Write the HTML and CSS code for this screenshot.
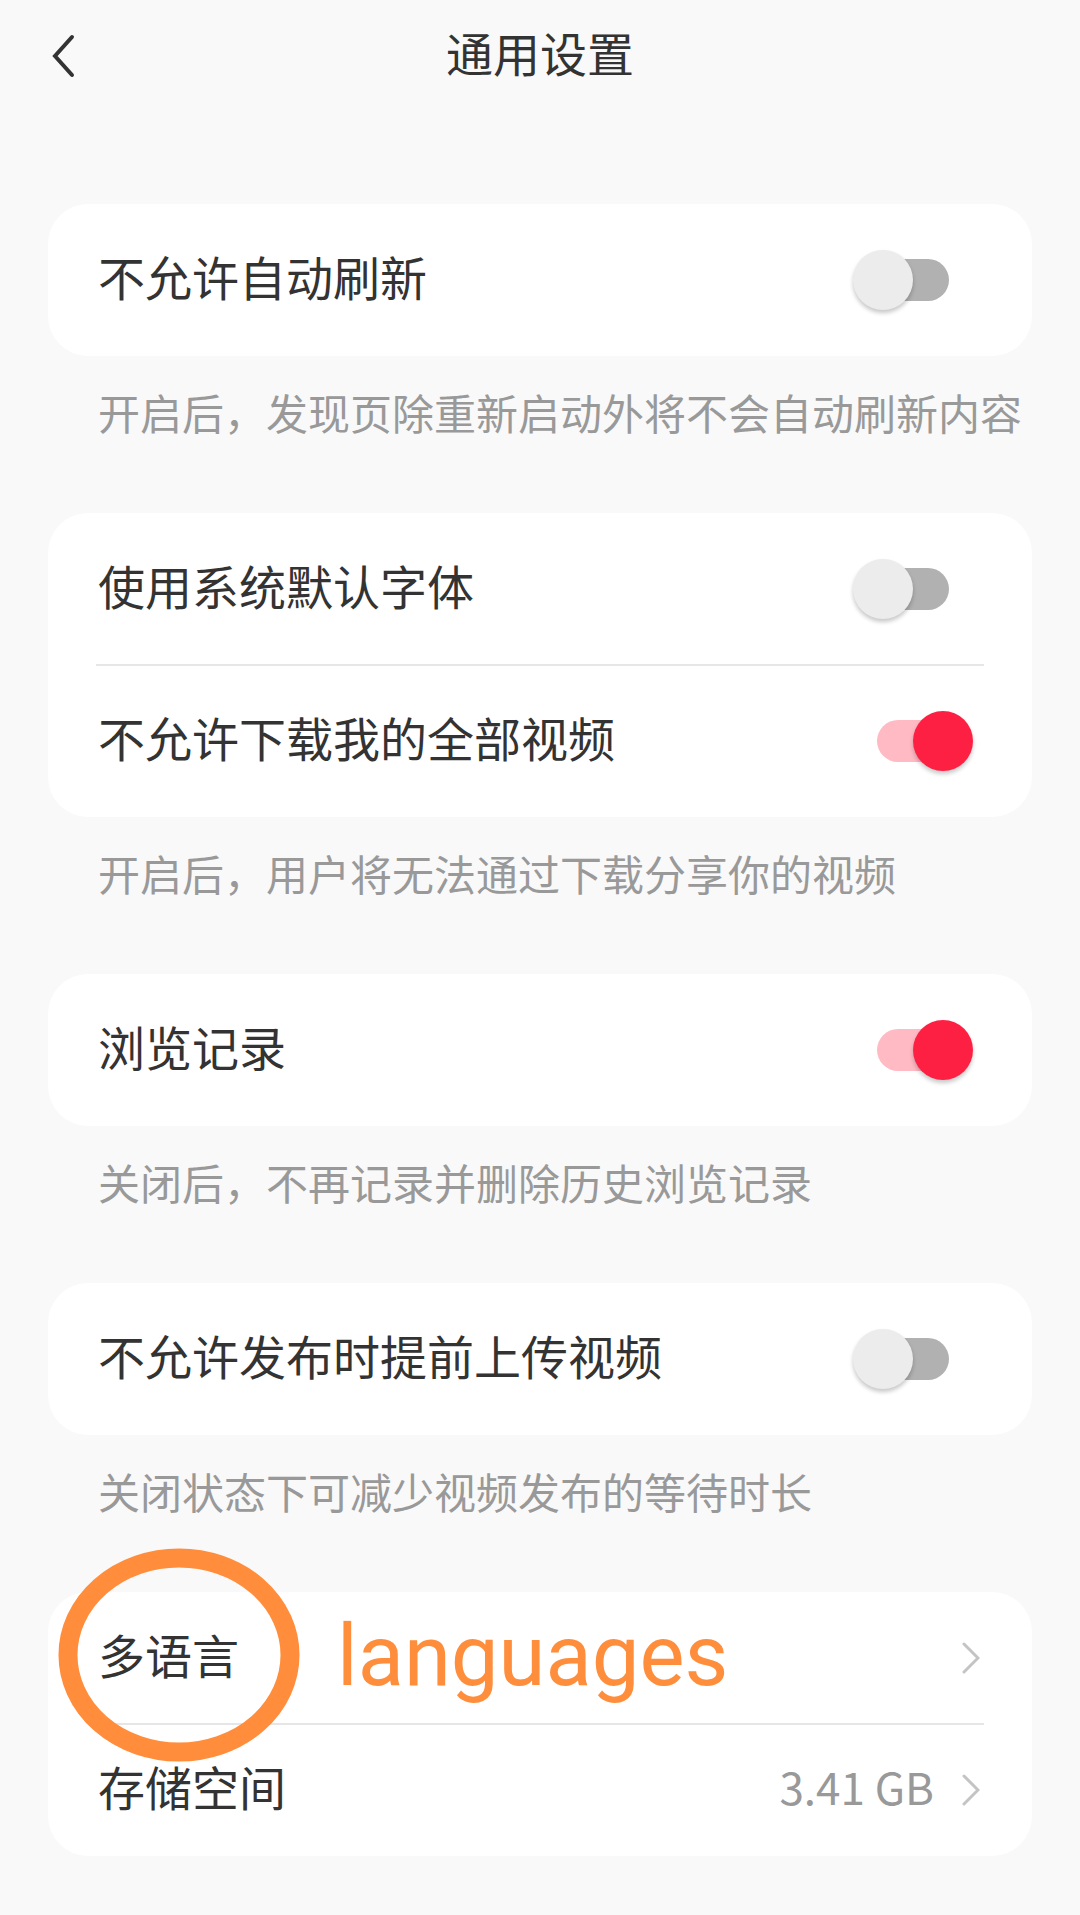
FILE: index.html
```html
<!DOCTYPE html>
<html lang="zh-CN">
<head>
  <meta charset="UTF-8" />
  <title>通用设置</title>
  <link rel="stylesheet" href="styles.css">
</head>
<body>
  <header class="topbar">
    <button class="back" aria-label="返回">
      <svg width="24" height="44" viewBox="0 0 24 44">
        <polyline points="20,3 3,22 20,41" fill="none" stroke="#333" stroke-width="4" stroke-linecap="round" />
      </svg>
    </button>
    <h1 class="title">通用设置</h1>
    <span></span>
  </header>

  <main class="list">
    <section class="card">
      <div class="row">
        <span class="label">不允许自动刷新</span>
        <span class="switch"></span>
      </div>
    </section>
    <p class="hint">开启后，发现页除重新启动外将不会自动刷新内容</p>

    <section class="card">
      <div class="row">
        <span class="label">使用系统默认字体</span>
        <span class="switch"></span>
      </div>
      <div class="divider"></div>
      <div class="row">
        <span class="label">不允许下载我的全部视频</span>
        <span class="switch on"></span>
      </div>
    </section>
    <p class="hint">开启后，用户将无法通过下载分享你的视频</p>

    <section class="card">
      <div class="row">
        <span class="label">浏览记录</span>
        <span class="switch on"></span>
      </div>
    </section>
    <p class="hint">关闭后，不再记录并删除历史浏览记录</p>

    <section class="card">
      <div class="row">
        <span class="label">不允许发布时提前上传视频</span>
        <span class="switch"></span>
      </div>
    </section>
    <p class="hint">关闭状态下可减少视频发布的等待时长</p>

    <section class="card card-links">
      <div class="row row-link">
        <span class="label">多语言</span>
        <svg class="chevron" width="18" height="32" viewBox="0 0 18 32">
          <polyline points="2,2 16,16 2,30" fill="none" stroke="#c4c4c4" stroke-width="3" stroke-linecap="round" />
        </svg>
      </div>
      <div class="divider"></div>
      <div class="row row-link">
        <span class="label">存储空间</span>
        <span class="value">3.41 GB</span>
        <svg class="chevron" width="18" height="32" viewBox="0 0 18 32">
          <polyline points="2,2 16,16 2,30" fill="none" stroke="#c4c4c4" stroke-width="3" stroke-linecap="round" />
        </svg>
      </div>

      <!-- annotation drawn over the screenshot -->
      <svg class="mark-circle" width="242" height="214" viewBox="0 0 242 214">
        <ellipse cx="121" cy="107" rx="111" ry="97" fill="none" stroke="#ff8d3b" stroke-width="19" />
      </svg>
      <span class="mark-text">languages</span>
    </section>
  </main>
</body>
</html>
```

FILE: styles.css
```css
body {
  margin: 0;
  background: #f9f9f9;
  color: #333;
  font-family: "Noto Sans CJK SC", "Noto Sans", sans-serif;
}

.topbar {
  height: 112px;
  display: grid;
  grid-template-columns: 1fr auto 1fr;
  align-items: center;
}

.back {
  justify-self: start;
  margin-left: 52px;
  padding: 0;
  border: none;
  background: none;
  display: flex;
}

.title {
  margin: 0;
  padding-bottom: 10px;
  font-size: 47px;
  font-weight: 400;
  line-height: 1;
}

.list {
  padding: 92px 48px 0;
}

.card {
  position: relative;
  background: #fff;
  border-radius: 40px;
}

.row {
  height: 152px;
  display: flex;
  align-items: center;
  padding: 0 59px 0 50px;
}

.label {
  flex: 1;
  padding-bottom: 10px;
  font-size: 47px;
  line-height: 1;
  white-space: nowrap;
}

.divider {
  position: relative;
  height: 2px;
  margin: -1px 48px;
  background: #e6e6e6;
}

.hint {
  margin: 0;
  padding: 26px 0 71px 50px;
  font-size: 42px;
  line-height: 60px;
  color: #999;
  white-space: nowrap;
}

.switch {
  position: relative;
  flex: none;
  width: 120px;
  height: 60px;
}

.switch::before {
  content: "";
  position: absolute;
  left: 24px;
  top: 9px;
  width: 72px;
  height: 42px;
  border-radius: 21px;
  background: #b1b1b1;
}

.switch::after {
  content: "";
  position: absolute;
  left: 0;
  top: 0;
  width: 60px;
  height: 60px;
  border-radius: 50%;
  background: #ececec;
  box-shadow: 0 3px 4px rgba(0, 0, 0, 0.22);
}

.switch.on::before {
  background: #ffbac4;
}

.switch.on::after {
  left: 60px;
  background: #fe2043;
}

.row-link {
  height: 132px;
  padding-right: 52px;
}

.value {
  margin-right: 28px;
  padding-bottom: 8px;
  font-size: 44px;
  line-height: 1;
  color: #999;
}

.chevron {
  flex: none;
}

.mark-circle {
  position: absolute;
  left: 10px;
  top: -44px;
  pointer-events: none;
}

.mark-text {
  position: absolute;
  left: 289px;
  top: 22px;
  font-family: Roboto, sans-serif;
  font-size: 85px;
  line-height: 85px;
  color: #ff8e3c;
}
```
